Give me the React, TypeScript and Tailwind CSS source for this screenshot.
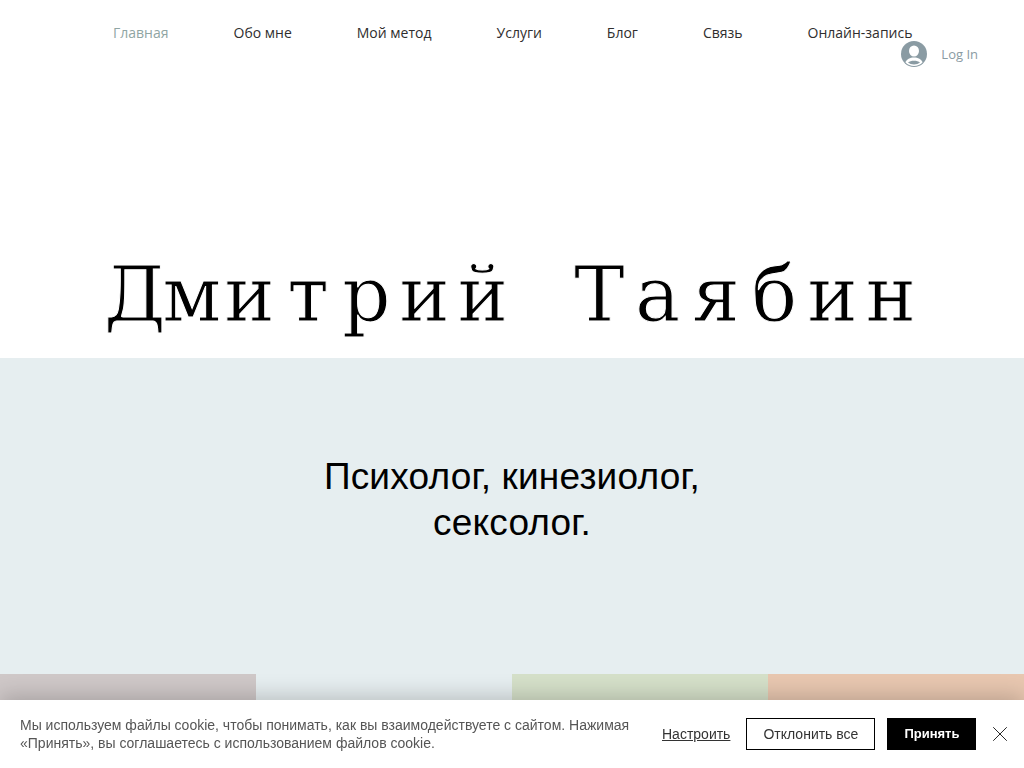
import { X } from "lucide-react";

const navItems = ["Главная", "Обо мне", "Мой метод", "Услуги", "Блог", "Связь", "Онлайн-запись"];
const title = "Дмитрий Таябин".split("");

function UserIcon() {
  return (
    <svg viewBox="0 0 26 26" className="w-[26px] h-[26px]">
      <circle cx="13" cy="13" r="13" fill="#8a9ba3" />
      <ellipse cx="13" cy="10" rx="5" ry="5.500" fill="#fff" />
      <path d="M4.500 21.500c1-3.500 4.500-5 8.500-5s7.500 1.500 8.500 5c-2 2.200-5.200 3.500-8.500 3.500s-6.500-1.300-8.500-3.500z" fill="#fff" />
      <path d="M7 21.500c1.500-1.300 3.500-1.800 6-1.800s4.500.5 6 1.800c-1.500 1.300-3.700 2-6 2s-4.500-.7-6-2z" fill="#8a9ba3" />
    </svg>
  );
}

function CookieBar() {
  return (
    <div className="fixed inset-x-0 bottom-0 h-[68px] bg-white shadow-[0_-4px_22px_rgba(0,0,0,0.2)] flex items-center pl-5 font-['Liberation_Sans',sans-serif]">
      <p className="w-[626px] text-sm leading-[18px] text-[#555]">
        Мы используем файлы cookie, чтобы понимать, как вы взаимодействуете с сайтом. Нажимая
        «Принять», вы соглашаетесь с использованием файлов cookie.
      </p>
      <a className="ml-4 text-sm text-[#333] underline">Настроить</a>
      <button className="ml-4 w-[129px] h-8 border border-black text-sm text-[#333]">
        Отклонить все
      </button>
      <button className="ml-3 w-[89px] h-8 bg-black text-[13px] font-bold text-white">
        Принять
      </button>
      <button className="ml-[11px] text-[#222]">
        <X className="w-[26px] h-[26px]" strokeWidth={0.9} />
      </button>
    </div>
  );
}

export default function App() {
  return (
    <div className="relative h-[768px] overflow-hidden bg-white font-['Open_Sans',sans-serif]">
      <header className="h-[240px] pt-[23px]">
        <nav className="flex h-[18px] gap-[65px] pl-[113px] text-sm leading-5 whitespace-nowrap text-[#2f2e2e]">
          {navItems.map((item, i) => (
            <a key={item} className={i === 0 ? "text-[#8fa5a3]" : ""}>
              {item}
            </a>
          ))}
        </nav>
        <div className="flex justify-end items-center gap-[14px] pr-[46px]">
          <UserIcon />
          <span className="mt-[2px] text-[13px] text-[#8a9ba3]">Log In</span>
        </div>
      </header>

      <div className="h-[118px] pt-[7px] flex justify-center">
        <h1 className="flex font-['DejaVu_Serif',serif] font-normal text-[76px] leading-[96px] text-black whitespace-pre [-webkit-text-stroke:1px_white]">
          {title.map((ch, i) => (
            <span key={i} className="w-[58.3px] text-center">
              {ch}
            </span>
          ))}
        </h1>
      </div>

      <section className="h-[316px] bg-[#e6eef0] pt-[96px] text-center font-['Liberation_Sans',sans-serif] text-[37px] tracking-[0.2px] leading-[46px] text-black">
        <p>Психолог, кинезиолог,</p>
        <p>сексолог.</p>
      </section>

      <div className="grid grid-cols-4 h-[94px]">
        <div className="bg-[#cfc8c8]" />
        <div className="bg-[#e6eef0]" />
        <div className="bg-[#d5e0c9]" />
        <div className="bg-[#e8c7b0]" />
      </div>

      <CookieBar />
    </div>
  );
}
